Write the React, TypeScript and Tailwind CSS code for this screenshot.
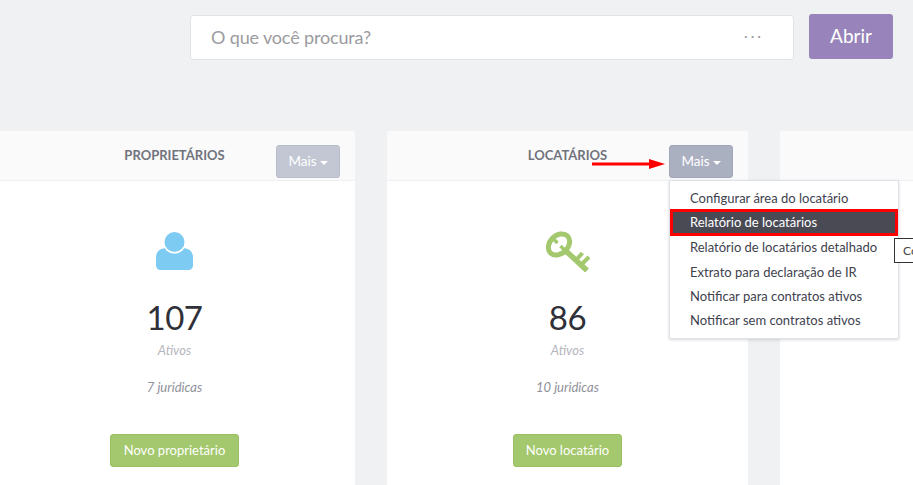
import React from "react";

const lato = "font-['Lato','Open_Sans',sans-serif]";

function UserIcon() {
  return (
    <svg width="37" height="40" viewBox="0 0 37 40" fill="#7dcbf2">
      <path d="M0 34 V27 C0 20 4 17.5 10 17 H27 C33 17.5 37 20 37 27 V34 C37 37.5 35 39 32 39 H5 C2 39 0 37.5 0 34 Z" />
      <circle cx="18.5" cy="11" r="11.5" fill="#ffffff" />
      <circle cx="18.5" cy="11" r="10" />
    </svg>
  );
}

function KeyIcon() {
  return (
    <svg width="44" height="41" viewBox="0 0 44 41" fill="none" stroke="#a3c86d">
      <ellipse cx="13" cy="13.5" rx="12" ry="9" strokeWidth="5" transform="rotate(-45 13 13.5)" />
      <path strokeWidth="3.5" d="M8 8.5 L11.5 12 M18 18.5 L14.5 15" />
      <path strokeWidth="5.5" d="M20 20 L41 39.5" />
      <path strokeWidth="4" d="M30 29 L36.5 22" />
      <path strokeWidth="4" d="M35 34 L43 26" />
    </svg>
  );
}

function Card({
  title,
  icon,
  count,
  juridicas,
  action,
  active,
}: {
  title: string;
  icon: React.ReactNode;
  count: string;
  juridicas: string;
  action: string;
  active?: boolean;
}) {
  return (
    <div className="w-[361px] shrink-0 bg-white rounded-[3px] h-[400px] relative">
      <div className="h-[50px] bg-[#fafafb] border-b border-[#eff0f5] rounded-t-[3px] flex justify-center relative">
        <div className="text-[13px] leading-[18px] font-bold text-[#71737b] pt-[15px]">{title}</div>
        <button
          className={`absolute right-[15px] top-[14px] w-[64px] h-[33px] rounded-[3px] border text-white text-[13.5px] flex items-center justify-center gap-[3px] pb-[1px] ${
            active ? "bg-[#abb0c1] border-[#a1a6b8]" : "bg-[#c3c7d3] border-[#b9bdca]"
          }`}
        >
          Mais
          <span className="w-0 h-0 border-x-[4px] border-x-transparent border-t-[4px] border-t-white mt-[3px]" />
        </button>
      </div>
      <div className="flex flex-col items-center">
        <div className="h-[42px] mt-[49px] flex items-center justify-center">{icon}</div>
        <div className="text-[33px] leading-[44px] mt-[23px] text-[#2f3038] tracking-[-0.5px]">{count}</div>
        <div className="text-[13px] leading-[18px] italic text-[#b5b6bd] mt-[2px]">Ativos</div>
        <div className="text-[13px] leading-[18px] italic text-[#8f9099] mt-[19px]">{juridicas}</div>
        <button
          className={`h-[33px] mt-[38px] rounded-[3px] bg-[#a3c86d] border border-[#99c063] text-white text-[13px] leading-none ${
            active ? "px-[12px]" : "px-[13px]"
          }`}
        >
          {action}
        </button>
      </div>
    </div>
  );
}

const menuItems = [
  "Configurar área do locatário",
  "Relatório de locatários",
  "Relatório de locatários detalhado",
  "Extrato para declaração de IR",
  "Notificar para contratos ativos",
  "Notificar sem contratos ativos",
];

export default function App() {
  return (
    <div className={`${lato} w-[913px] h-[485px] overflow-hidden bg-[#f0f1f3] relative`}>
      <div className="flex items-start pl-[190px] pt-[14px] gap-[15px]">
        <div className="w-[604px] h-[45px] mt-[1px] bg-white border border-[#e2e3e8] rounded-[3px] flex items-center justify-between pl-[20px] pr-[29px]">
          <span className="text-[18px] tracking-[-0.15px] text-[#9b9ba1]">O que você procura?</span>
          <span className="text-[14px] tracking-[3px] text-[#9b9ba1] leading-none mb-[4px]">···</span>
        </div>
        <button className="w-[84px] h-[45px] bg-[#9884ba] rounded-[3px] text-white text-[19px]">Abrir</button>
      </div>

      <div className="flex gap-[32px] ml-[-6px] mt-[71px]">
        <Card title="PROPRIETÁRIOS" icon={<UserIcon />} count="107" juridicas="7 juridicas" action="Novo proprietário" />
        <Card title="LOCATÁRIOS" icon={<KeyIcon />} count="86" juridicas="10 juridicas" action="Novo locatário" active />
        <div className="w-[361px] shrink-0 bg-white rounded-[3px] h-[400px]">
          <div className="h-[50px] bg-[#fafafb] border-b border-[#eff0f5] rounded-t-[3px]" />
        </div>
      </div>

      {/* red annotation arrow */}
      <svg className="absolute left-[592px] top-[158px]" width="74" height="12" viewBox="0 0 74 12" fill="#ff0000">
        <rect x="0" y="4.5" width="60" height="3" />
        <path d="M57 1 L73 6 L57 11 Z" />
      </svg>

      {/* dropdown menu */}
      <div className="absolute left-[669px] top-[180px] w-[230px] h-[159px] bg-white border border-[#dfe1e8] shadow-[0_1px_3px_rgba(0,0,0,0.15)] pt-[5px]">
        {menuItems.map((item, i) =>
          i === 1 ? (
            <div
              key={item}
              className="h-[27px] -my-[1px] pl-[17px] bg-[#4a4a55] border-[3px] border-[#ff0000] text-white text-[13px] leading-[21px]"
            >
              {item}
            </div>
          ) : (
            <div key={item} className="h-[24.3px] pl-[20px] text-[13px] leading-[24px] text-[#40424e] whitespace-nowrap">
              {item}
            </div>
          )
        )}
      </div>

      {/* tooltip */}
      <div className="absolute left-[894px] top-[238px] w-[60px] h-[25px] bg-white border border-[#333] text-[12px] leading-[23px] text-[#444] pl-[8px]">
        Co
      </div>
    </div>
  );
}
